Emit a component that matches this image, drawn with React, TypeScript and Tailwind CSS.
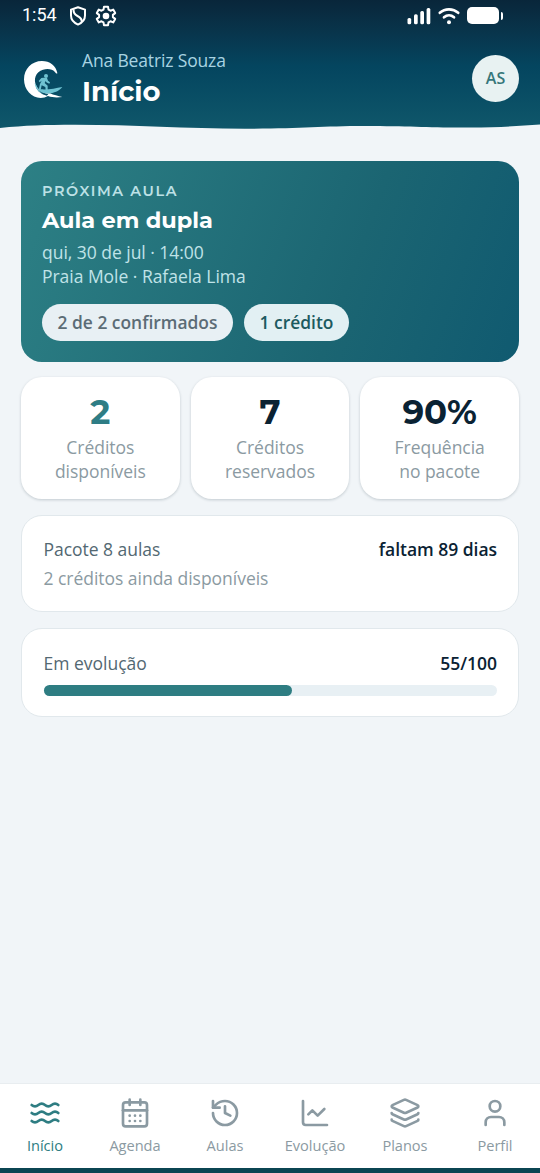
import React from "react";
import { CalendarDays, ChartLine, History, Layers, User, Waves } from "lucide-react";

const stats = [
  { value: "2", first: "Créditos", second: "disponíveis", color: "text-[#2e7d85]" },
  { value: "7", first: "Créditos", second: "reservados", color: "text-[#0a2233]" },
  { value: "90%", first: "Frequência", second: "no pacote", color: "text-[#0a2233]" },
];

const tabs = [
  { label: "Início", Icon: Waves, active: true },
  { label: "Agenda", Icon: CalendarDays, active: false },
  { label: "Aulas", Icon: History, active: false },
  { label: "Evolução", Icon: ChartLine, active: false },
  { label: "Planos", Icon: Layers, active: false },
  { label: "Perfil", Icon: User, active: false },
];

function StatusBar() {
  return (
    <div className="flex h-[31px] items-center pl-[22px] pr-[37px] text-white">
      <span className="w-[46px] pb-[2px] font-[Roboto,sans-serif] text-[18px] leading-none">1:54</span>
      <svg className="h-5 w-5" viewBox="0 0 20 20" fill="none" stroke="white" strokeWidth="2" strokeLinejoin="round">
        <path d="M10 1.200 17 3.600v6c0 4-2.800 7.300-7 9-4.200-1.700-7-5-7-9v-6Z" />
        <path d="M5.500 3.200c-.2 4 1.500 5.500 4 6.800 2.800 1.500 4.500 3 4.200 5.800" />
      </svg>
      <svg className="ml-[7px] h-[22px] w-[22px]" viewBox="0 0 22 22" fill="none" stroke="white" strokeWidth="2" strokeLinejoin="round">
        <path d="M9 1.700h4l.5 2.900 2 1.100 2.700-1.100 2 3.500-2.300 1.800v2.200l2.300 1.800-2 3.500-2.700-1.100-2 1.100-.5 2.900H9l-.5-2.900-2-1.100-2.700 1.100-2-3.500 2.300-1.800V9.900L1.800 8.100l2-3.500 2.700 1.100 2-1.100Z" />
        <circle cx="11" cy="11" r="3.300" fill="white" stroke="none" />
      </svg>
      <svg className="ml-auto h-[18px] w-6" viewBox="0 0 24 18" fill="white">
        <rect x="0.500" y="11" width="3.700" height="6.300" rx="1.500" />
        <rect x="7" y="7.300" width="3.700" height="10" rx="1.500" />
        <rect x="13.300" y="4" width="3.700" height="13.300" rx="1.500" />
        <rect x="19.600" y="1" width="3.700" height="16.300" rx="1.500" />
      </svg>
      <svg className="ml-[6px] h-[18px] w-[24px]" viewBox="0 0 24 18" fill="none" stroke="white" strokeWidth="2.700" strokeLinecap="round">
        <path d="M2.800 5.800c5.200-4.600 13.200-4.600 18.400 0" />
        <path d="M7 10.300c3-2.600 7-2.600 10 0" />
        <circle cx="12" cy="15.300" r="2" fill="white" stroke="none" />
      </svg>
      <div className="ml-[6px] h-[17px] w-8 rounded-[5px] bg-white" />
      <div className="ml-[2px] h-2 w-[2px] rounded-r bg-white" />
    </div>
  );
}

function Logo() {
  return (
    <svg className="h-[48px] w-[44px]" viewBox="63 162 132 144">
      <path
        d="M172 219C168 197 149 183 126 183 95 183 72 207 72 238c0 32 23 56 50 56 9 0 15-2 22-6 14 5 28 5 43 3-13-3-26-6-37-11-14 1-32-6-41-22-10-20-2-43 20-49 15-4 29-1 35 6 4 5 8 8 8 4Z"
        fill="white"
      />
      <path d="M108 262c5 12 17 22 32 25l5-4c-17-4-29-12-37-21Z" fill="#0a4e65" />
      <path d="M117 271c9 8 20 11 34 9 17-3 30-10 36-19-20 4-40 8-62 7-4 0-9 1-8 3Z" fill="#6fc3d2" />
      <path d="M104 249c2 17 11 27 24 32-10-8-16-15-18-24Z" fill="#6fc3d2" />
      <circle cx="138" cy="228" r="6" fill="#6fc3d2" />
      <path d="m130 233 11 1 3 8 6 5-2 4-9-4-2-4-3 6 9 8v13h-6l-1-9-11-5-3 14h-6l4-18 5-10-6 5-3-4 8-9Z" fill="#6fc3d2" />
    </svg>
  );
}

function Header() {
  return (
    <header className="relative flex h-[132px] shrink-0 flex-col bg-linear-to-b from-[#09263a] via-[#04455f] to-[#10586b]">
      <StatusBar />
      <div className="flex h-[94px] items-center px-[21px]">
        <Logo />
        <div className="ml-[17px] flex flex-1 flex-col">
          <span className="text-[17.500px] leading-6 tracking-[-0.150px] text-[#a8d3e2]">Ana Beatriz Souza</span>
          <h1 className="mt-px h-9 font-[Montserrat,Inter,sans-serif] text-[27.400px] leading-9 font-bold whitespace-nowrap text-white">Início</h1>
        </div>
        <div className="flex size-[47px] items-center justify-center rounded-full bg-[#e8f2f2] text-[16px] font-semibold text-[#36777a]">AS</div>
      </div>
      <svg className="absolute bottom-0 left-0 h-2 w-full" viewBox="0 0 540 8" preserveAspectRatio="none">
        <path d="M0 4C25 1.500 45 .8 75 .8 135 .8 185 4.700 245 4.700 300 4.700 320 2 365 2 410 2 430 3.800 470 3.500 500 3.200 520 2 540 .5V8H0Z" fill="#f1f5f8" />
      </svg>
    </header>
  );
}

function NextLesson() {
  return (
    <section className="flex h-[201px] flex-col rounded-[21px] bg-[linear-gradient(110deg,#2d8085_0%,#1b6572_65%,#105a70_100%)] px-[21px] pt-[20px]">
      <span className="font-[Montserrat,Inter,sans-serif] text-[14.400px] leading-5 font-semibold tracking-[1.620px] text-[#bde1e6]">PRÓXIMA AULA</span>
      <h2 className="mt-[4px] h-[31px] font-[Montserrat,Inter,sans-serif] text-[22.500px] leading-[31px] font-bold whitespace-nowrap text-white">Aula em dupla</h2>
      <p className="mt-[4px] text-[17.500px] leading-6 tracking-[-0.030px] text-[#c0e3e8]">
        qui, 30 de jul · 14:00
        <br />
        Praia Mole · Rafaela Lima
      </p>
      <div className="mt-[16px] flex gap-[11px] text-[17.400px] font-semibold">
        <span className="flex h-[37px] w-[191px] items-center justify-center rounded-full bg-[#e8f0f4] whitespace-nowrap text-[#5b6c76]">2 de 2 confirmados</span>
        <span className="flex h-[37px] w-[105px] items-center justify-center rounded-full bg-[#e2f0f3] whitespace-nowrap text-[#1c5a60]">1 crédito</span>
      </div>
    </section>
  );
}

export default function App() {
  return (
    <div className="flex h-[1173px] w-[540px] flex-col overflow-hidden bg-[#f1f5f8] font-['Open_Sans',sans-serif]">
      <Header />
      <main className="flex flex-1 flex-col px-[21px] pt-[29px]">
        <NextLesson />
        <div className="mt-[15px] grid grid-cols-3 gap-[11px]">
          {stats.map((stat) => (
            <div key={stat.value} className="flex h-[122px] flex-col items-center rounded-[21px] bg-white pt-[13px] shadow-[0_1px_3px_rgba(10,34,51,0.2)]">
              <strong className={`font-[Montserrat,Inter,sans-serif] text-[34px] leading-[44px] font-bold ${stat.color}`}>{stat.value}</strong>
              <span className="mt-px text-center text-[17.500px] leading-6 tracking-[-0.030px] text-[#8b9aa2]">
                {stat.first}
                <br />
                {stat.second}
              </span>
            </div>
          ))}
        </div>
        <section className="mt-[16px] flex h-[97px] flex-col rounded-[21px] border border-[#e1e8ec] bg-white pr-[21px] pl-[21.500px] pt-[21px] text-[17.500px] leading-6 tracking-[-0.030px]">
          <div className="flex justify-between">
            <span className="text-[#536872]">Pacote 8 aulas</span>
            <span className="font-semibold text-[#0a2233]">faltam 89 dias</span>
          </div>
          <span className="mt-[5px] text-[#8b9aa2]">2 créditos ainda disponíveis</span>
        </section>
        <section className="mt-4 flex h-[89px] flex-col rounded-[21px] border border-[#e1e8ec] bg-white pr-[21px] pl-[21.500px] pt-[22px] text-[17.500px] leading-6">
          <div className="flex justify-between">
            <span className="text-[#536872]">Em evolução</span>
            <span className="font-semibold text-[#0a2233]">55/100</span>
          </div>
          <div className="mt-[10px] h-[11px] rounded-full bg-[#e8f0f4]">
            <div className="h-full rounded-full bg-[#2e7d82]" style={{ width: "54.8%" }} />
          </div>
        </section>
      </main>
      <nav className="grid h-[85px] shrink-0 grid-cols-6 border-t border-[#e8edf0] bg-white">
        {tabs.map(({ label, Icon, active }) => (
          <div key={label} className={`flex flex-col items-center pt-[13px] ${active ? "text-[#2e7d82]" : "text-[#8b9aa2]"}`}>
            <Icon size={32} strokeWidth={2} />
            <span className="mt-[6px] text-[14.600px] leading-5 tracking-[-0.030px]">{label}</span>
          </div>
        ))}
      </nav>
      <div className="h-[5px] shrink-0 bg-[#0b4552]" />
    </div>
  );
}
